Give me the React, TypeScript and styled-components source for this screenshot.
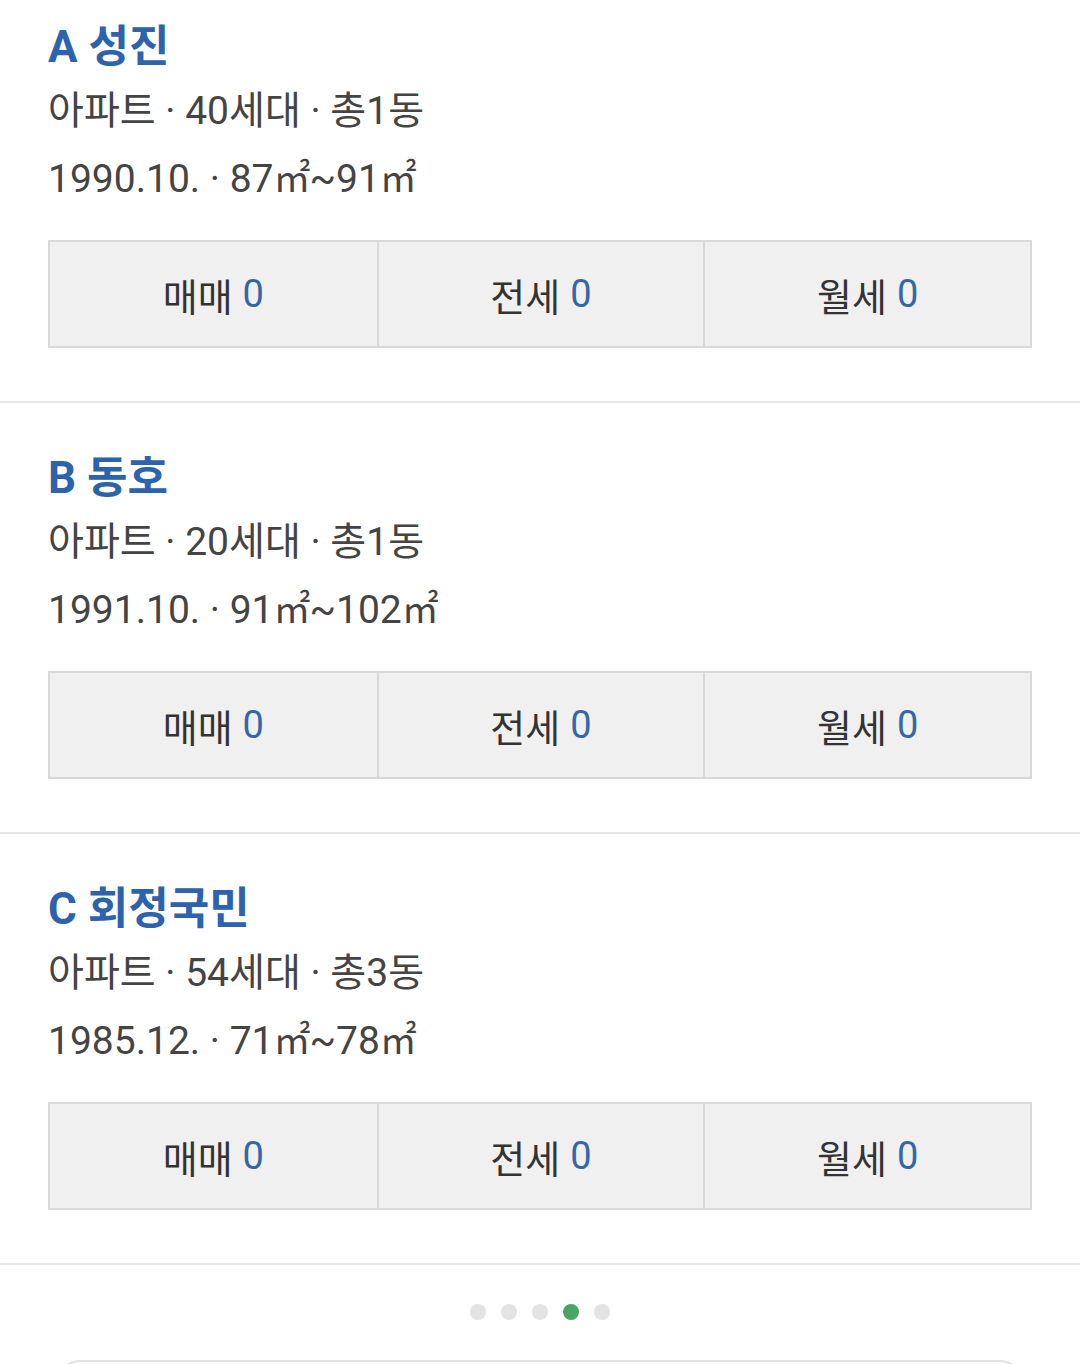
import styled, { createGlobalStyle } from 'styled-components';

const GlobalStyle = createGlobalStyle`
  html, body {
    margin: 0;
    padding: 0;
    background: #fff;
    font-family: Roboto, 'Noto Sans CJK KR', sans-serif;
    overflow: hidden;
  }
`;

type Complex = {
  mark: string;
  name: string;
  households: number;
  buildings: number;
  built: string;
  minArea: number;
  maxArea: number;
};

const complexes: Complex[] = [
  { mark: 'A', name: '성진', households: 40, buildings: 1, built: '1990.10.', minArea: 87, maxArea: 91 },
  { mark: 'B', name: '동호', households: 20, buildings: 1, built: '1991.10.', minArea: 91, maxArea: 102 },
  { mark: 'C', name: '회정국민', households: 54, buildings: 3, built: '1985.12.', minArea: 71, maxArea: 78 },
];

const deals = ['매매', '전세', '월세'];

const Page = styled.div`
  width: 1080px;
  height: 1364px;
  overflow: hidden;
`;

// the view is scrolled a little, so the first card starts above the top edge
const List = styled.div`
  margin-top: -28px;
`;

const Section = styled.section`
  padding: 40px 48px 53px;
  border-bottom: 2px solid #e6e6e6;
`;

const Title = styled.h2`
  margin: 0;
  padding-top: 4px;
  font-size: 44px;
  line-height: 63px;
  height: 63px;
  font-weight: 700;
  color: #2d63ad;
`;

const Info = styled.p`
  margin: 0;
  font-size: 39px;
  line-height: 65px;
  height: 65px;
  color: #444;
  white-space: nowrap;
`;

const Area = styled.span`
  font-family: 'Noto Sans CJK KR', sans-serif;
  font-size: 37px;
  letter-spacing: -1px;
`;

const Table = styled.div`
  margin-top: 31px;
  display: grid;
  grid-template-columns: repeat(3, 1fr);
  height: 108px;
  box-sizing: border-box;
  border: 2px solid #d9d9d9;
  background: #f0f0f0;
`;

const Cell = styled.div<{ $first?: boolean }>`
  display: flex;
  align-items: center;
  justify-content: center;
  gap: 10px;
  font-size: 38px;
  color: #333;
  border-left: ${({ $first }) => ($first ? 'none' : '2px solid #d9d9d9')};
`;

const Count = styled.span`
  color: #3567a8;
`;

const Dots = styled.div`
  display: flex;
  justify-content: center;
  gap: 15px;
  padding: 39px 0 40px;
`;

const Dot = styled.span<{ $active?: boolean }>`
  width: 16px;
  height: 16px;
  border-radius: 50%;
  background: ${({ $active }) => ($active ? '#48a563' : '#e3e3e3')};
`;

const BottomCard = styled.div`
  margin: 0 56px;
  height: 60px;
  border: 2px solid #e2e2e2;
  border-bottom: none;
  border-radius: 24px 24px 0 0;
`;

export default function App() {
  return (
    <Page>
      <GlobalStyle />
      <List>
        {complexes.map((c) => (
          <Section key={c.mark}>
            <Title>
              {c.mark} {c.name}
            </Title>
            <Info>
              아파트 · {c.households}세대 · 총{c.buildings}동
            </Info>
            <Info>
              {c.built} · {c.minArea}
              <Area>㎡</Area>~{c.maxArea}
              <Area>㎡</Area>
            </Info>
            <Table>
              {deals.map((d, i) => (
                <Cell key={d} $first={i === 0}>
                  {d}
                  <Count>0</Count>
                </Cell>
              ))}
            </Table>
          </Section>
        ))}
      </List>
      <Dots>
        {[0, 1, 2, 3, 4].map((i) => (
          <Dot key={i} $active={i === 3} />
        ))}
      </Dots>
      <BottomCard />
    </Page>
  );
}
